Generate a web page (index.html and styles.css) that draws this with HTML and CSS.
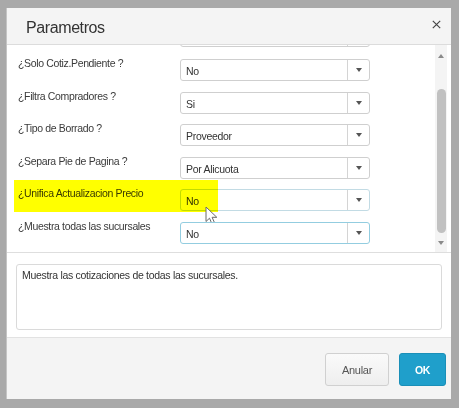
FILE: index.html
```html
<!DOCTYPE html>
<html lang="es">
<head>
<meta charset="utf-8">
<title>Parametros</title>
<link rel="stylesheet" href="styles.css">
</head>
<body>
<div class="dialog">
  <div class="header">
    <div class="title">Parametros</div>
    <svg class="close" width="9" height="9" viewBox="0 0 9 9"><path d="M0.8 0.8 L8.2 8.2 M8.2 0.8 L0.8 8.2" stroke="#444" stroke-width="1.15" fill="none"/></svg>
  </div>
  <div class="scroll">
    <div class="content">
      <div class="list">
        <div class="row">
          <div class="label"></div>
          <div class="select"><span class="value"></span><span class="arrow"><i class="tri"></i></span></div>
        </div>
        <div class="row">
          <div class="label">¿Solo Cotiz.Pendiente ?</div>
          <div class="select"><span class="value">No</span><span class="arrow"><i class="tri"></i></span></div>
        </div>
        <div class="row">
          <div class="label">¿Filtra Compradores ?</div>
          <div class="select"><span class="value">Si</span><span class="arrow"><i class="tri"></i></span></div>
        </div>
        <div class="row">
          <div class="label">¿Tipo de Borrado ?</div>
          <div class="select"><span class="value">Proveedor</span><span class="arrow"><i class="tri"></i></span></div>
        </div>
        <div class="row">
          <div class="label">¿Separa Pie de Pagina ?</div>
          <div class="select"><span class="value">Por Alicuota</span><span class="arrow"><i class="tri"></i></span></div>
        </div>
        <div class="row marked">
          <div class="label">¿Unifica Actualizacion Precio</div>
          <div class="select hover"><span class="value">No</span><span class="arrow"><i class="tri"></i></span></div>
          <div class="highlight"></div>
          <svg class="cursor" width="14" height="20" viewBox="0 0 14 20"><path d="M1 1 L1 15.5 L4.5 12.2 L7 18 L9.6 16.9 L7.1 11.3 L11.8 11.3 Z" fill="#fff" stroke="#6a6a6a" stroke-width="1" stroke-linejoin="round"/></svg>
        </div>
        <div class="row">
          <div class="label">¿Muestra todas las sucursales</div>
          <div class="select focus"><span class="value">No</span><span class="arrow"><i class="tri"></i></span></div>
        </div>
      </div>
    </div>
    <div class="scrollbar">
      <i class="sb-up"></i>
      <div class="thumb"></div>
      <i class="sb-down"></i>
    </div>
    <div class="edge"></div>
  </div>
  <div class="desc">
    <div class="desc-box">Muestra las cotizaciones de todas las sucursales.</div>
  </div>
  <div class="footer">
    <button class="btn cancel">Anular</button>
    <button class="btn ok">OK</button>
  </div>
</div>
</body>
</html>
```
FILE: styles.css
```css
* { box-sizing: border-box; }
html, body { margin: 0; }
body {
  width: 459px;
  height: 408px;
  background: #a9a9a9;
  padding: 8px 8px 9px 7px;
  font-family: "Liberation Sans", Arial, sans-serif;
  color: #333;
  overflow: hidden;
}
.dialog {
  width: 444px;
  height: 391px;
  background: #fff;
  display: flex;
  flex-direction: column;
  box-shadow: -1px 0 0 #c4c4c4;
}
.header {
  height: 37px;
  flex: none;
  background: #f4f4f4;
  border-bottom: 1px solid #dcdcdc;
  display: flex;
  justify-content: space-between;
  align-items: flex-start;
  padding: 0 10px 0 19px;
}
.title {
  margin-top: 11px;
  font-size: 16px;
  line-height: 18px;
  letter-spacing: -0.4px;
  color: #333;
}
.close { margin-top: 12px; }
.scroll {
  height: 208px;
  flex: none;
  display: flex;
  border-bottom: 1px solid #dedede;
}
.content {
  flex: 1;
  overflow: hidden;
  padding-left: 11px;
}
.list { margin-top: -19.6px; }
.row {
  position: relative;
  height: 32.6px;
  display: flex;
  align-items: flex-start;
}
.row:first-child { height: 33.6px; }
.label {
  width: 162px;
  flex: none;
  margin-top: -2px;
  font-size: 10.5px;
  line-height: 12px;
  letter-spacing: -0.35px;
  color: #3a3a3a;
}
.select {
  width: 190px;
  height: 22px;
  flex: none;
  display: flex;
  border: 1px solid #cfcfcf;
  border-radius: 3px;
  background: #fff;
}
.select.hover { border-color: #c2dbe4; }
.select.focus { border-color: #93cde0; }
.value {
  flex: 1;
  padding: 2px 0 0 5px;
  font-size: 10.5px;
  line-height: 18px;
  letter-spacing: -0.3px;
  color: #333;
}
.arrow {
  width: 22px;
  flex: none;
  border-left: 1px solid #d4d4d4;
  display: flex;
  align-items: center;
  justify-content: center;
}
.tri {
  width: 0;
  height: 0;
  border-left: 3px solid transparent;
  border-right: 3px solid transparent;
  border-top: 4px solid #555;
}
.highlight {
  position: absolute;
  left: -4px;
  top: -9.4px;
  width: 204px;
  height: 32px;
  background: #ffff00;
  mix-blend-mode: multiply;
  pointer-events: none;
}
.cursor {
  position: absolute;
  left: 187px;
  top: 17px;
}
.scrollbar {
  width: 12px;
  flex: none;
  background: #f4f4f4;
  display: flex;
  flex-direction: column;
  align-items: center;
}
.sb-up {
  margin-top: 9px;
  width: 0;
  height: 0;
  border-left: 3px solid transparent;
  border-right: 3px solid transparent;
  border-bottom: 4px solid #8a8a8a;
}
.thumb {
  margin-top: 31px;
  width: 9px;
  height: 144px;
  border-radius: 5px;
  background: #c1c1c1;
}
.sb-down {
  margin-top: 8px;
  width: 0;
  height: 0;
  border-left: 3px solid transparent;
  border-right: 3px solid transparent;
  border-top: 4px solid #8a8a8a;
}
.edge { width: 4px; flex: none; }
.desc {
  flex: none;
  padding: 11px 9px 7px 9px;
}
.desc-box {
  height: 66px;
  border: 1px solid #dadada;
  border-radius: 3px;
  padding: 4px 5px;
  font-size: 10.5px;
  line-height: 13px;
  letter-spacing: -0.3px;
  color: #333;
}
.footer {
  flex: 1;
  background: #f4f4f4;
  border-top: 1px solid #e2e2e2;
  display: flex;
  justify-content: flex-end;
  align-items: flex-start;
  gap: 10px;
  padding: 15px 5px 0 0;
}
.btn {
  height: 33px;
  border-radius: 3px;
  font-family: "Liberation Sans", Arial, sans-serif;
  font-size: 11px;
  letter-spacing: -0.3px;
  cursor: pointer;
}
.cancel {
  width: 64px;
  background: linear-gradient(#fafafa, #eeeeee);
  border: 1px solid #d0d0d0;
  color: #555;
}
.ok {
  width: 47px;
  background: #1f9fcb;
  border: 1px solid #1a8fb8;
  color: #fff;
  font-weight: bold;
  font-size: 10.5px;
}
```
